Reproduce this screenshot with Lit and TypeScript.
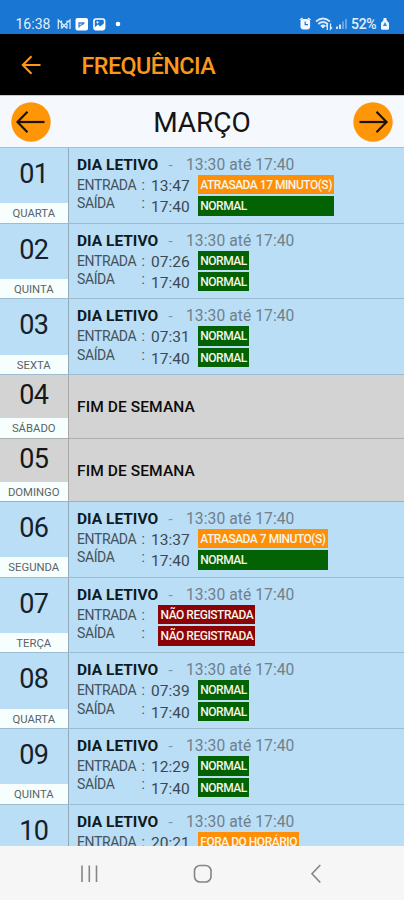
import { LitElement, html, css, nothing } from "lit";
import { customElement, property } from "lit/decorators.js";
import { classMap } from "lit/directives/class-map.js";

type Tone = "ok" | "late" | "missing";
interface Mark { time: string; text: string; tone: Tone }
interface Day { num: string; name: string; marks?: [Mark, Mark] }

const ok = (time: string): Mark => ({ time, text: "NORMAL", tone: "ok" });
const late = (time: string, text: string): Mark => ({ time, text, tone: "late" });
const missing = (): Mark => ({ time: "", text: "NÃO REGISTRADA", tone: "missing" });

const DAYS: Day[] = [
  { num: "01", name: "QUARTA", marks: [late("13:47", "ATRASADA 17 MINUTO(S)"), ok("17:40")] },
  { num: "02", name: "QUINTA", marks: [ok("07:26"), ok("17:40")] },
  { num: "03", name: "SEXTA", marks: [ok("07:31"), ok("17:40")] },
  { num: "04", name: "SÁBADO" },
  { num: "05", name: "DOMINGO" },
  { num: "06", name: "SEGUNDA", marks: [late("13:37", "ATRASADA 7 MINUTO(S)"), ok("17:40")] },
  { num: "07", name: "TERÇA", marks: [missing(), missing()] },
  { num: "08", name: "QUARTA", marks: [ok("07:39"), ok("17:40")] },
  { num: "09", name: "QUINTA", marks: [ok("12:29"), ok("17:40")] },
  { num: "10", name: "SEXTA", marks: [late("20:21", "FORA DO HORÁRIO"), ok("17:40")] },
];

@customElement("day-row")
export class DayRow extends LitElement {
  @property({ attribute: false }) day!: Day;

  static styles = css`
    :host { display: block; flex: none; }
    .row {
      display: flex; box-sizing: border-box; height: 75.7px;
      background: #b9def5; border-bottom: 1px solid #9dbccf;
    }
    .weekend { height: 63.5px; background: #d3d3d3; border-color: #adadad; }
    .side {
      width: 68.5px; box-sizing: border-box; flex: none; display: flex; flex-direction: column;
      border-right: 1px solid #91a9b9;
    }
    .weekend .side { border-color: #a9a9a9; }
    .num {
      flex: 1; font-size: 27px; line-height: 30px; padding-top: 11px; text-align: center;
      color: #16202a; box-sizing: border-box; letter-spacing: -0.7px;
    }
    .weekend .num { padding-top: 5px; color: #161616; }
    .name {
      height: 19.4px; line-height: 21.5px; background: #f7fffe; text-align: center;
      font-size: 11.3px; color: #5b6367; flex: none; white-space: nowrap;
    }
    .body { flex: 1; padding-left: 8.5px; min-width: 0; }
    .weekend .body { display: flex; align-items: center; }
    .head { display: flex; height: 27px; line-height: 34px; white-space: nowrap; }
    .title { font-weight: 700; font-size: 15.5px; color: #101a22; width: 91.5px; }
    .weekend .title { width: auto; font-weight: 500; font-size: 15.5px; color: #0c0c0c; padding-top: 2px; letter-spacing: 0.1px; }
    .dash { width: 17.5px; font-size: 15px; color: #84949f; }
    .hours { font-size: 15.6px; color: #70808b; letter-spacing: 0.08px; }
    .marks { display: flex; white-space: nowrap; }
    .labels { width: 74px; font-size: 14px; line-height: 18.3px; color: #45525b; padding-top: 1px; }
    .label { display: flex; }
    .key { width: 64.5px; letter-spacing: -0.4px; }
    .times { width: 47px; font-size: 15.5px; line-height: 23px; color: #3c4851; }
    .empty { width: 7.3px; }
    .time { height: 21.4px; }
    .badges { display: flex; flex-direction: column; gap: 2px; }
    .badge {
      height: 19.4px; line-height: 21.6px; padding: 0 2.3px; color: #f5f5ea; font-size: 12px;
      font-weight: 500; letter-spacing: -0.49px;
    }
    .ok { background: #036203; }
    .late { background: #ff8f07; }
    .missing { background: #8b0304; }
  `;

  render() {
    const { num, name, marks } = this.day;
    return html`
      <div class=${classMap({ row: true, weekend: !marks })}>
        <div class="side">
          <div class="num">${num}</div>
          <div class="name">${name}</div>
        </div>
        <div class="body">
          ${marks
            ? html`
                <div class="head">
                  <span class="title">DIA LETIVO</span>
                  <span class="dash">-</span>
                  <span class="hours">13:30 até 17:40</span>
                </div>
                <div class="marks">
                  <div class="labels">
                    <div class="label"><span class="key">ENTRADA</span>:</div>
                    <div class="label"><span class="key">SAÍDA</span>:</div>
                  </div>
                  <div class=${classMap({ times: true, empty: !marks[0].time })}>
                    ${marks.map((m) => html`<div class="time">${m.time || nothing}</div>`)}
                  </div>
                  <div class="badges">
                    ${marks.map((m) => html`<div class="badge ${m.tone}">${m.text}</div>`)}
                  </div>
                </div>`
            : html`<span class="title">FIM DE SEMANA</span>`}
        </div>
      </div>`;
  }
}

@customElement("app-root")
export class AppRoot extends LitElement {
  static styles = css`
    :host {
      display: flex; flex-direction: column; width: 404px; height: 900px; overflow: hidden;
      font-family: Roboto, "Liberation Sans", sans-serif; background: #f6f6f6;
    }
    svg { display: block; fill: none; flex: none; }
    .status {
      height: 34px; flex: none; box-sizing: border-box; background: #1976d2; color: #e3effb;
      display: flex; align-items: center; padding: 14px 14.5px 0 15.5px; font-size: 14px;
    }
    .clock { width: 41px; }
    .spacer { flex: 1; }
    .battery { margin-left: 3.5px; letter-spacing: -0.3px; width: 28.5px; white-space: nowrap; font-weight: 500; }
    .bar {
      height: 61px; flex: none; background: #000; display: flex; align-items: center;
      padding-left: 21px; color: #fb981a;
    }
    .heading { font-size: 23.3px; font-weight: 500; margin-left: 40.5px; padding-top: 3px; white-space: nowrap; letter-spacing: -0.55px; }
    .month {
      height: 53px; flex: none; box-sizing: border-box; display: flex; align-items: center;
      justify-content: space-between; padding: 0 11px; background: #f5f8fc;
      border-top: 1px solid #c9c9c9; border-bottom: 1px solid #b5bcc2;
    }
    .name { font-size: 28px; color: #141414; padding-top: 1px; }
    .list { flex: 1; min-height: 0; overflow: hidden; display: flex; flex-direction: column; }
    .nav { height: 54px; flex: none; background: #f6f6f6; }
  `;

  private arrow(flip: boolean) {
    return html`<svg width="40" height="40" viewBox="0 0 40 40">
      <circle cx="20" cy="20" r="19.7" fill="#ff9608"/>
      <g transform=${flip ? "translate(40 0) scale(-1 1)" : ""} stroke="#1d1303">
        <path d="M6.5 20H33.5" stroke-width="2.2"/>
        <path d="M16.5 9.8L6.5 20L16.5 30.3" stroke-width="2.2"/>
      </g>
    </svg>`;
  }

  render() {
    return html`
      <div class="status">
        <span class="clock">16:38</span>
        <svg width="66" height="16" viewBox="0 0 66 16">
          <path d="M1.3 13V4L7 9.5L13 4V13M4.5 12.5L7 9.5L10 12.5M4.5 4.5V12.5M10 4.5V12.5" stroke="#d4e6f8" stroke-width="1.3"/>
          <rect x="18.5" y="2" width="12.5" height="12.5" rx="2" fill="#fff"/>
          <path d="M22 11.5V7H27.5M22.5 10L27 7.5" stroke="#3d83cb" stroke-width="1.3"/>
          <rect x="37" y="3" width="10.6" height="10.6" rx="2" stroke="#fff" stroke-width="1.6"/>
          <path d="M38 13V11L41 8.5L43 10.5L47 7.5V13Z" fill="#fff"/>
          <circle cx="40.5" cy="6.3" r="1.1" fill="#fff"/>
          <circle cx="61" cy="8" r="2.3" fill="#fff"/>
        </svg>
        <span class="spacer"></span>
        <svg width="49" height="16" viewBox="0 0 49 16">
          <path d="M1 4L3.5 2M11.5 4L9 2" stroke="#e3effb" stroke-width="1.6"/>
          <rect x="1.5" y="3" width="9.6" height="10.5" rx="3" fill="#f2f8fe"/>
          <path d="M6.2 5.5V8.6H9" stroke="#1976d2" stroke-width="1.2"/>
          <path d="M17 5.5Q24 -0.5 31 5.5M19.2 8Q24 4 28.8 8" stroke="#d4e6f8" stroke-width="1.7"/>
          <path d="M21.3 9.8Q24 7.4 26.7 9.8L24 12.5Z" fill="#e3effb"/>
          <path d="M28.3 14V8.5L26.8 10.3M31.5 7.5V13L33 11.3" stroke="#e3effb" stroke-width="1.3"/>
          <path d="M38 13V10.5M41 13V8.5" stroke="#cfe3f7" stroke-width="2"/>
          <path d="M44 13V5.5M47 13V3" stroke="#6fabe4" stroke-width="1.8"/>
        </svg>
        <span class="battery">52%</span>
        <svg width="10" height="16" viewBox="0 0 10 16">
          <path d="M3.5 4V2H6.5V4L9 7V12.5Q9 13.8 7.6 13.8H2.4Q1 13.8 1 12.5V7Z" fill="#edf5fd"/>
          <path d="M5 6L3 10H7Z" fill="#3b87d3"/>
        </svg>
      </div>
      <div class="bar">
        <svg width="20" height="20" viewBox="0 0 20 20" stroke="#fb981a" stroke-width="2.1">
          <path d="M19.5 10H2M10.5 1.3L1.8 10L10.5 18.7"/>
        </svg>
        <span class="heading">FREQUÊNCIA</span>
      </div>
      <div class="month">
        ${this.arrow(false)}
        <span class="name">MARÇO</span>
        ${this.arrow(true)}
      </div>
      <div class="list">${DAYS.map((d) => html`<day-row .day=${d}></day-row>`)}</div>
      <svg class="nav" width="404" height="54" viewBox="0 0 404 54" stroke="#858585" stroke-width="1.6">
        <path d="M82 19.5V36M89.3 19.5V36M96.5 19.5V36"/>
        <rect x="194.5" y="19.5" width="16.5" height="16.5" rx="5.5"/>
        <path d="M320.3 19L312 27.7L320.3 36.5"/>
      </svg>`;
  }
}
